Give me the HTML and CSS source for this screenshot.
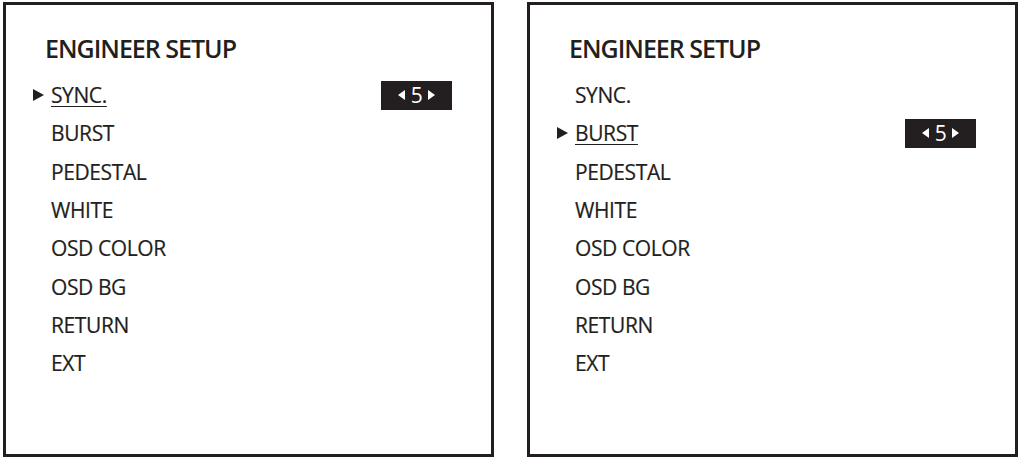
FILE: index.html
```html
<!DOCTYPE html>
<html lang="en">
<head>
  <meta charset="UTF-8" />
  <title>Engineer Setup</title>
  <link rel="stylesheet" href="styles.css">
</head>
<body>
  <main class="screens">
    <!-- SYNC. seleccionado -->
    <section class="osd">
      <h1>ENGINEER SETUP</h1>
      <ul class="menu">
        <li class="item active"><span class="label">SYNC.</span><span class="value"><i class="tri left"></i>5<i class="tri right"></i></span></li>
        <li class="item"><span class="label">BURST</span></li>
        <li class="item"><span class="label">PEDESTAL</span></li>
        <li class="item"><span class="label">WHITE</span></li>
        <li class="item"><span class="label">OSD COLOR</span></li>
        <li class="item"><span class="label">OSD BG</span></li>
        <li class="item"><span class="label">RETURN</span></li>
        <li class="item"><span class="label">EXT</span></li>
      </ul>
    </section>

    <!-- BURST seleccionado -->
    <section class="osd">
      <h1>ENGINEER SETUP</h1>
      <ul class="menu">
        <li class="item"><span class="label">SYNC.</span></li>
        <li class="item active"><span class="label">BURST</span><span class="value"><i class="tri left"></i>5<i class="tri right"></i></span></li>
        <li class="item"><span class="label">PEDESTAL</span></li>
        <li class="item"><span class="label">WHITE</span></li>
        <li class="item"><span class="label">OSD COLOR</span></li>
        <li class="item"><span class="label">OSD BG</span></li>
        <li class="item"><span class="label">RETURN</span></li>
        <li class="item"><span class="label">EXT</span></li>
      </ul>
    </section>
  </main>
</body>
</html>
```

FILE: styles.css
```css
* {
  box-sizing: border-box;
  margin: 0;
  padding: 0;
}

body {
  font-family: 'Open Sans', 'Noto Sans', sans-serif;
  background: #ffffff;
  color: #231f20;
  width: 1024px;
  height: 461px;
  overflow: hidden;
}

.screens {
  display: flex;
  gap: 33px;
  padding: 2px 0 0 3px;
}

.osd {
  width: 491px;
  height: 455px;
  border: 3px solid #231f20;
  padding: 27px 0 0 40px;
}

h1 {
  font-size: 25px;
  font-weight: 600;
  letter-spacing: -1px;
  line-height: 32px;
  margin-bottom: 12px;
  margin-left: -1px;
}

.menu {
  list-style: none;
  width: 406px;
}

.item {
  position: relative;
  display: flex;
  align-items: center;
  justify-content: space-between;
  height: 38.3px;
  padding-left: 5px;
  font-size: 21px;
  letter-spacing: -0.4px;
  -webkit-text-stroke: 0.2px #231f20;
}

.item.active .label {
  text-decoration: underline;
  text-decoration-thickness: 1px;
  text-underline-offset: 3px;
}

.item.active::before {
  content: "";
  position: absolute;
  left: -13px;
  top: 50%;
  margin-top: -6px;
  border-left: 11px solid #231f20;
  border-top: 6px solid transparent;
  border-bottom: 6px solid transparent;
}

.value {
  display: flex;
  align-items: center;
  justify-content: center;
  gap: 6px;
  width: 71px;
  height: 29px;
  background: #231f20;
  color: #ffffff;
  font-size: 21px;
  -webkit-text-stroke: 0;
}

.tri {
  display: block;
  border-top: 5px solid transparent;
  border-bottom: 5px solid transparent;
}

.tri.left {
  border-right: 7px solid #ffffff;
}

.tri.right {
  border-left: 7px solid #ffffff;
}
```
